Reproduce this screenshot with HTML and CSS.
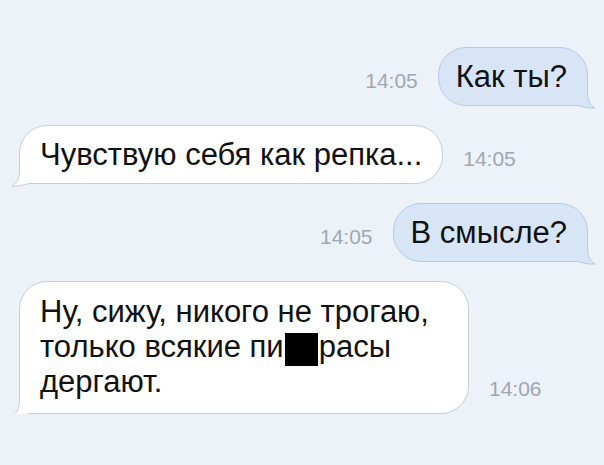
FILE: index.html
```html
<!DOCTYPE html>
<html lang="ru">
<head>
	<meta charset="UTF-8">
	<meta name="viewport" content="width=device-width, initial-scale=1.0">
	<title>Сообщения</title>
	<link rel="stylesheet" href="styles.css">
</head>
<body>

	<main class="chat">
		<div class="row out">
			<span class="time">14:05</span>
			<div class="bubble">
				<svg class="tail" viewBox="0 0 36 30"><path class="tail-fill" d="M0,0 H27.5 V14 C27.5,21 30,26 35,29 C29,29.5 23,28 18,26.5 H0 Z"/><path class="tail-line" d="M0,26.5 H18 C23,28 29,29.5 35,29 C30,26 27.5,21 27.5,14 V0"/></svg>
				<span class="text">Как ты?</span>
			</div>
		</div>

		<div class="row in">
			<div class="bubble">
				<svg class="tail" viewBox="0 0 36 30"><path class="tail-fill" d="M0,0 H27.5 V14 C27.5,21 30,26 35,29 C29,29.5 23,28 18,26.5 H0 Z"/><path class="tail-line" d="M0,26.5 H18 C23,28 29,29.5 35,29 C30,26 27.5,21 27.5,14 V0"/></svg>
				<span class="text">Чувствую себя как репка...</span>
			</div>
			<span class="time">14:05</span>
		</div>

		<div class="row out">
			<span class="time">14:05</span>
			<div class="bubble">
				<svg class="tail" viewBox="0 0 36 30"><path class="tail-fill" d="M0,0 H27.5 V14 C27.5,21 30,26 35,29 C29,29.5 23,28 18,26.5 H0 Z"/><path class="tail-line" d="M0,26.5 H18 C23,28 29,29.5 35,29 C30,26 27.5,21 27.5,14 V0"/></svg>
				<span class="text">В смысле?</span>
			</div>
		</div>

		<div class="row in">
			<div class="bubble long">
				<svg class="tail" viewBox="0 0 36 30"><path class="tail-fill" d="M0,0 H27.5 V14 C27.5,21 30,26 35,29 C29,29.5 23,28 18,26.5 H0 Z"/><path class="tail-line" d="M0,26.5 H18 C23,28 29,29.5 35,29 C30,26 27.5,21 27.5,14 V0"/></svg>
				<span class="text">Ну, сижу, никого не трогаю, только всякие пи<span class="censor"></span>расы дергают.</span>
			</div>
			<span class="time">14:06</span>
		</div>
	</main>

</body>
</html>
```

FILE: styles.css
```css
body{
	margin: 0;
	background: #edf1f8;
	font-family: "Liberation Sans", Arial, sans-serif;
}

.chat{
	display: flex;
	flex-direction: column;
	gap: 19px;
	padding: 47px 16px 0 19px;
}

.row{
	display: flex;
	align-items: flex-end;
	gap: 20px;
}

.row.out{
	justify-content: flex-end;
}

.bubble{
	position: relative;
	max-width: 408px;
	padding: 11px 20px 11px;
	border: 1px solid;
	border-radius: 28px;
	font-size: 31px;
	line-height: 35px;
	color: #111;
}

.text{
	position: relative;
}

.out .bubble{
	background: #d8e5f7;
	border-color: #b7c9e2;
}

.out .bubble:last-child{
	padding-left: 17px;
}

.in .bubble{
	background: #fff;
	border-color: #c6cdd7;
}

.long{
	width: 408px;
	padding-top: 12px;
	padding-bottom: 14px;
}

.tail{
	position: absolute;
	width: 36px;
	height: 30px;
	bottom: -4px;
}

.out .tail{
	right: -9px;
}

.in .tail{
	left: -9px;
	transform: scaleX(-1);
}

.tail-line{
	fill: none;
	stroke-width: 1;
}

.out .tail-fill{ fill: #d8e5f7; }
.out .tail-line{ stroke: #b7c9e2; }
.in .tail-fill{ fill: #fff; }
.in .tail-line{ stroke: #c6cdd7; }

.censor{
	display: inline-block;
	width: 33px;
	height: 33px;
	margin: 0 1px -9px;
	background: #000;
}

.time{
	font-size: 21px;
	line-height: 20px;
	color: #a0a7b0;
	margin-bottom: 15px;
}
```
